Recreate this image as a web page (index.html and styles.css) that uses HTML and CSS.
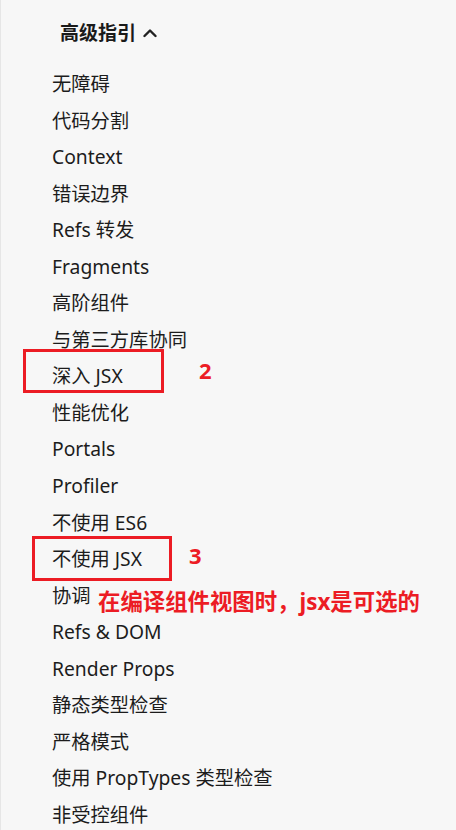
FILE: index.html
```html
<!DOCTYPE html>
<html lang="zh-CN">
<head>
<meta charset="utf-8">
<link rel="stylesheet" href="styles.css">
</head>
<body>
<div class="panel">
  <div class="section-title">
    <span>高级指引</span>
    <svg class="chev" width="14" height="10" viewBox="0 0 14 10"><path d="M1.5 8 L7 2.5 L12.5 8" fill="none" stroke="#222" stroke-width="2.4" stroke-linecap="round" stroke-linejoin="round"/></svg>
  </div>
  <ul class="nav">
    <li>无障碍</li>
    <li>代码分割</li>
    <li>Context</li>
    <li>错误边界</li>
    <li>Refs 转发</li>
    <li>Fragments</li>
    <li>高阶组件</li>
    <li>与第三方库协同</li>
    <li>深入 JSX</li>
    <li>性能优化</li>
    <li>Portals</li>
    <li>Profiler</li>
    <li>不使用 ES6</li>
    <li>不使用 JSX</li>
    <li>协调</li>
    <li>Refs &amp; DOM</li>
    <li>Render Props</li>
    <li>静态类型检查</li>
    <li>严格模式</li>
    <li>使用 PropTypes 类型检查</li>
    <li>非受控组件</li>
  </ul>
  <div class="mark box-a"></div>
  <div class="num num-a">2</div>
  <div class="mark box-b"></div>
  <div class="num num-b">3</div>
  <div class="note">在编译组件视图时，jsx是可选的</div>
</div>
</body>
</html>
```

FILE: styles.css
```css
html, body {
  margin: 0;
  padding: 0;
  background: #f7f7f7;
}
body {
  font-family: "Noto Sans", "Noto Sans CJK SC", sans-serif;
  color: #1c1c1c;
}
.panel {
  position: relative;
  width: 456px;
  height: 830px;
  overflow: hidden;
  border-left: 1px solid #e6e6e6;
  box-sizing: border-box;
}
.section-title {
  display: flex;
  align-items: center;
  gap: 7px;
  padding-left: 59px;
  height: 64px;
  font-size: 19px;
  font-weight: 700;
  color: #1a1a1a;
}
.chev {
  margin-top: 1px;
}
.nav {
  list-style: none;
  margin: 0;
  padding: 0 0 0 51px;
  margin-top: 2px;
}
.nav li {
  height: 36.55px;
  line-height: 36.55px;
  font-size: 19.3px;
  white-space: nowrap;
}
.mark {
  position: absolute;
  border: 3px solid #ec1c24;
  box-sizing: border-box;
}
.box-a {
  left: 22px;
  top: 349px;
  width: 141px;
  height: 44px;
}
.box-b {
  left: 31px;
  top: 536px;
  width: 140px;
  height: 45px;
}
.num {
  position: absolute;
  color: #ec1c24;
  font-family: "Noto Sans", "Noto Sans CJK SC", sans-serif;
  font-weight: 700;
  font-size: 22px;
  line-height: 1;
}
.num-a {
  left: 198px;
  top: 359px;
}
.num-b {
  left: 188px;
  top: 544px;
}
.note {
  position: absolute;
  left: 97px;
  top: 587px;
  color: #ec1c24;
  font-weight: 700;
  font-size: 22.4px;
  line-height: 30px;
  white-space: nowrap;
}
```
